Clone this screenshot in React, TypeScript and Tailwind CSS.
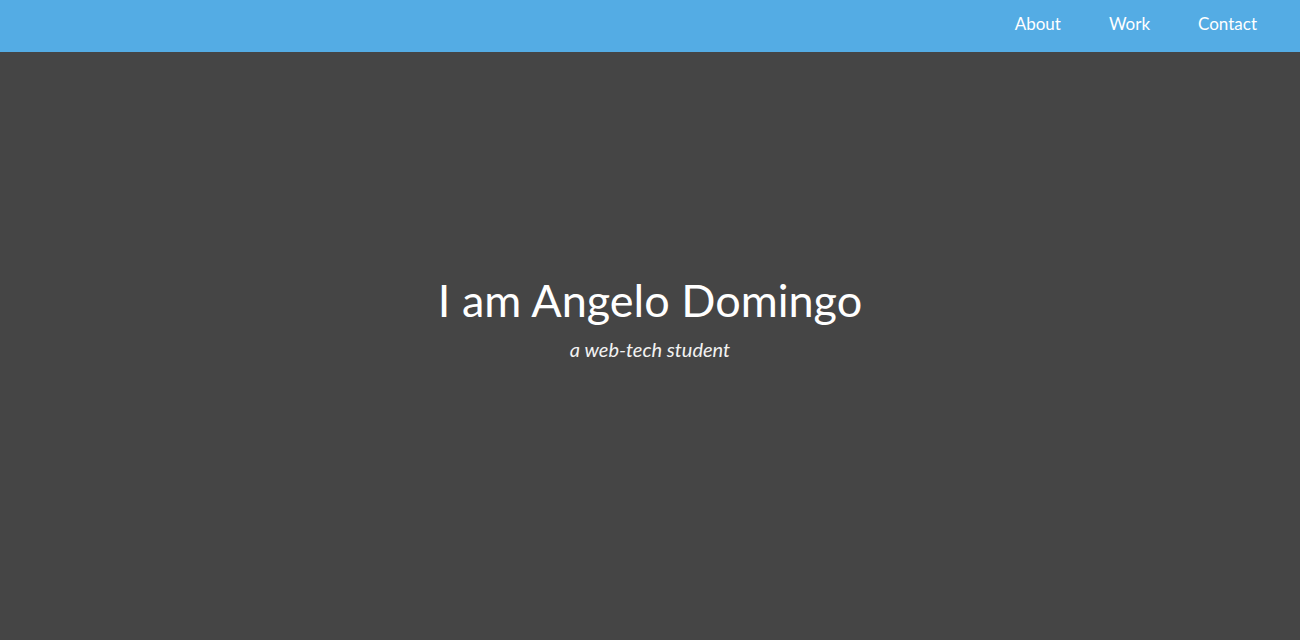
const font = { fontFamily: '"Lato", "Open Sans", sans-serif' };

const links = ['About', 'Work', 'Contact'];

export default function App() {
  return (
    <div className="flex min-h-[640px] flex-col bg-[#454545]" style={font}>
      <nav className="flex h-[52px] items-center justify-end bg-[#54ace4] pr-[19px] pb-[4px]">
        {links.map((link) => (
          <a key={link} href="#" className="px-6 text-[17px] text-white">
            {link}
          </a>
        ))}
      </nav>
      <main className="flex h-[588px] flex-col items-center justify-center pb-[55px] text-white">
        <h1 className="text-[45px] leading-[54px]">I am Angelo Domingo</h1>
        <p className="mt-[7px] text-[20px] italic text-[#f2f2f2]">a web-tech student</p>
      </main>
    </div>
  );
}
